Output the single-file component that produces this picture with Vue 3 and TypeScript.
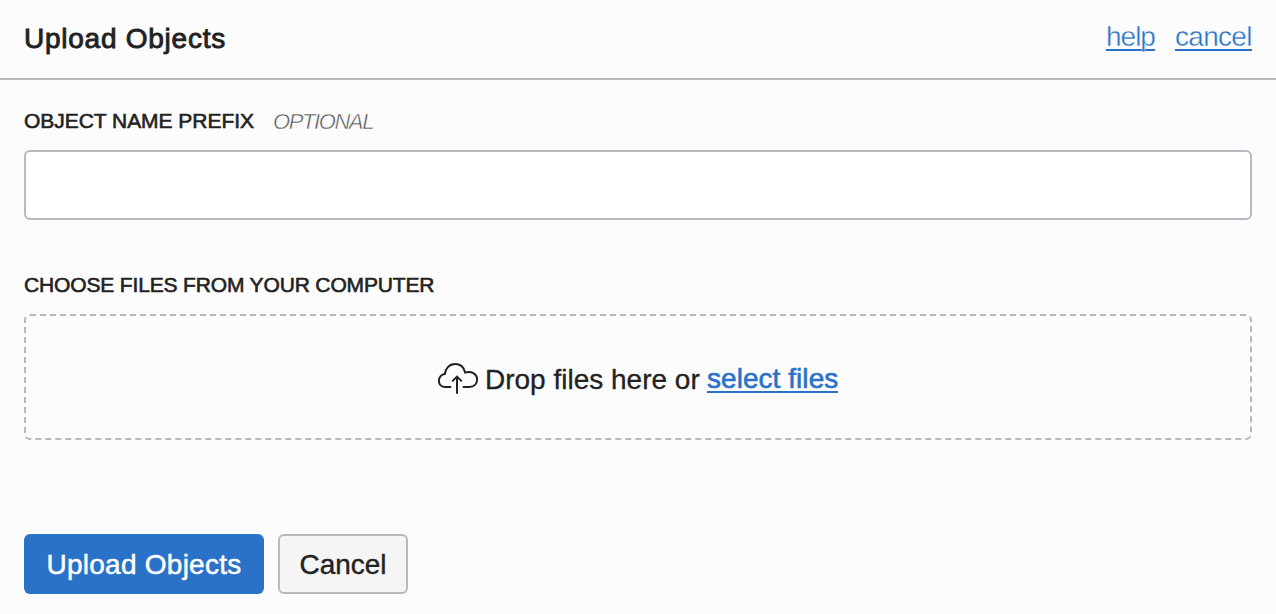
<script setup lang="ts">
import { ref } from 'vue'

const prefix = ref<string>('')
</script>

<template>
  <main class="dialog">
    <header class="header">
      <h1 class="title">Upload Objects</h1>
      <nav class="links">
        <a class="light-link help" href="#">help</a>
        <a class="light-link cancel-link" href="#">cancel</a>
      </nav>
    </header>
    <section class="body">
      <label class="label" for="prefix">
        <span class="label-text">OBJECT NAME PREFIX</span>
        <em class="optional">OPTIONAL</em>
      </label>
      <input id="prefix" v-model="prefix" class="field" type="text" />
      <div class="label files"><span class="label-text choose">CHOOSE FILES FROM YOUR COMPUTER</span></div>
      <div class="dropzone">
        <svg class="cloud" width="42" height="34" viewBox="0 0 42 34" fill="none" stroke="#222" stroke-width="2">
          <path d="M14.2 26H8.3C4.4 26 1.9 23.2 1.9 19.8C1.9 16 4.6 13.3 7.8 13.1C8.4 7.2 12.6 3 18 3C23 3 27 6.2 28.2 11.6C34.8 9.6 40.1 13.2 40.1 18.5C40.1 22.9 37 26 32.5 26H25.8" />
          <path d="M20 32.8V15.4M15.2 20.4L20 15.6l4.8 4.8" />
        </svg>
        <span class="drop-text">Drop files here or</span>
        <a class="select" href="#">select files</a>
      </div>
      <div class="actions">
        <button class="btn primary" type="button">Upload Objects</button>
        <button class="btn secondary" type="button">Cancel</button>
      </div>
    </section>
  </main>
</template>

<style>
body {
  background: #fcfcfc;
}
</style>

<style scoped>
.dialog,
.dialog * {
  box-sizing: border-box;
}
.dialog {
  height: 614px;
  overflow: hidden;
  background: #fcfcfc;
  color: #222;
  font-family: "Liberation Sans", Arial, sans-serif;
  font-size: 28px;
}
.header {
  display: flex;
  justify-content: space-between;
  height: 80px;
  padding: 0 24px;
  border-bottom: 2px solid #b5bac1;
}
.title {
  margin: 0;
  padding-top: 23px;
  font-size: 28px;
  line-height: 32px;
  font-weight: 400;
  letter-spacing: 0.75px;
  -webkit-text-stroke: 0.9px #222;
}
.links {
  display: flex;
  gap: 20px;
  padding-top: 21px;
}
.light-link {
  height: 30px;
  line-height: 32px;
  color: #2a72c8;
  text-decoration: none;
  border-bottom: 2px solid #2a72c8;
  -webkit-text-stroke: 0.4px #fcfcfc;
}
.help {
  width: 49px;
  letter-spacing: -1px;
}
.cancel-link {
  width: 77px;
  letter-spacing: -0.7px;
}
.body {
  padding: 0 24px;
}
.label {
  display: flex;
  height: 70px;
  padding-top: 29px;
  line-height: 24px;
}
.label-text {
  font-size: 21px;
  letter-spacing: -0.04px;
  -webkit-text-stroke: 0.6px #222;
}
.choose {
  letter-spacing: -0.15px;
}
.optional {
  margin: 1px 0 0 19px;
  font-size: 22px;
  letter-spacing: -1.4px;
  color: #555;
  -webkit-text-stroke: 0.5px #fcfcfc;
}
.field {
  display: block;
  width: 100%;
  height: 70px;
  padding: 0 16px;
  border: 2px solid #b5bac1;
  border-radius: 6px;
  outline: none;
  background: #fff;
  font: inherit;
}
.files {
  height: 94px;
  padding-top: 53px;
}
.dropzone {
  display: flex;
  height: 126px;
  padding: 45px 0 0 411px;
  border: 2px dashed #b5bac1;
  border-radius: 6px;
  line-height: 36px;
}
.cloud {
  flex: none;
}
.drop-text {
  margin: 1px 0 0 6px;
  width: 222px;
  white-space: nowrap;
  -webkit-text-stroke: 0.3px #222;
}
.select {
  height: 32px;
  color: #2a72c8;
  text-decoration: none;
  letter-spacing: 0.05px;
  border-bottom: 2px solid #2a72c8;
  -webkit-text-stroke: 0.6px #2a72c8;
}
.actions {
  display: flex;
  gap: 14px;
  padding-top: 94px;
}
.btn {
  height: 60px;
  padding: 2px 0 0;
  border: 0;
  border-radius: 6px;
  font: inherit;
  letter-spacing: 0.25px;
}
.primary {
  width: 240px;
  background: #2a72c8;
  color: #fff;
  -webkit-text-stroke: 0.5px #fff;
}
.secondary {
  width: 130px;
  border: 2px solid #b5bac1;
  background: #f5f5f5;
  color: #222;
  letter-spacing: 0;
  -webkit-text-stroke: 0.4px #222;
}
</style>
